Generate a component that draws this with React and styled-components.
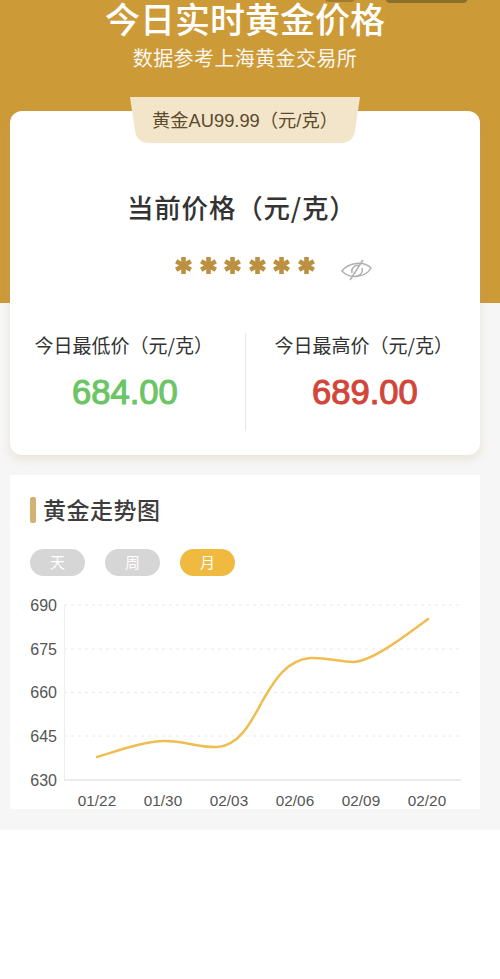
import React from "react";
import styled, { createGlobalStyle } from "styled-components";

const FONT = `"Noto Sans CJK SC", "Noto Sans", sans-serif`;
const NUM = `"Liberation Sans", "Noto Sans CJK SC", sans-serif`;

const GlobalStyle = createGlobalStyle`
  html, body { margin: 0; padding: 0; background: #fff; }
  * { box-sizing: border-box; }
`;

const Page = styled.div`
  position: relative;
  width: 500px;
  height: 979px;
  overflow: hidden;
  font-family: ${FONT};
  background: #fff;
`;

const Grey = styled.div`
  background: #f6f6f6;
  height: 830px;
  display: flex;
  flex-direction: column;
`;

const Header = styled.header`
  position: relative;
  height: 303px;
  flex-shrink: 0;
  background: #cd9a38;
  text-align: center;
  color: #fff;
  padding-right: 10px;
`;

const TopChip = styled.span`
  position: absolute;
  top: -8px;
  right: 32px;
  width: 83px;
  height: 11px;
  border-radius: 6px;
  background: #8c6f2c;
`;

const TopDot = styled.span`
  position: absolute;
  top: -6px;
  left: 325px;
  width: 30px;
  height: 8px;
  border-radius: 4px;
  background: #a07c30;
`;

const Title = styled.h1`
  margin: 0;
  font-size: 35px;
  line-height: 36px;
  font-weight: 500;
`;

const Subtitle = styled.p`
  margin: 8px 0 0;
  font-size: 20px;
  line-height: 28px;
  letter-spacing: 0.4px;
  opacity: 0.92;
`;

const PriceCard = styled.section`
  position: relative;
  margin: -192px 20px 0 10px;
  height: 344px;
  background: #fff;
  border-radius: 12px;
  box-shadow: 0 4px 10px rgba(190, 160, 110, 0.22);
  padding-top: 77px;
`;

const Tag = styled.div`
  position: absolute;
  top: -14px;
  left: 120px;
  width: 230px;
  height: 46px;
  display: flex;
  align-items: center;
  justify-content: center;
  padding-bottom: 2px;
  color: #5b4a2c;
  font-size: 18.3px;
  background: #f3e5c9;
  clip-path: path("M0 0 H230 L225 34 Q223 46 211 46 H19 Q7 46 5 34 Z");
  font-family: ${NUM};
`;

const PriceTitle = styled.h2`
  margin: 0 0 0 117px;
  font-size: 26.5px;
  line-height: 38px;
  font-weight: 500;
  color: #333;
  letter-spacing: 0.8px;
`;

const StarRow = styled.div`
  display: flex;
  align-items: center;
  margin: 22px 0 0 165px;
  height: 34px;
`;

const Star = styled.svg`
  width: 17px;
  height: 17px;
  margin-right: 7.5px;
  flex-shrink: 0;
`;

const EyeIcon = styled.svg`
  width: 31px;
  height: 22px;
  margin: 10px 0 0 18.5px;
`;

const Stats = styled.div`
  display: flex;
  margin-top: 51px;
  height: 98px;
`;

const Stat = styled.div`
  width: 235px;
  padding-left: ${(p) => (p.$divided ? "28.5px" : "24.5px")};
  border-left: ${(p) => (p.$divided ? "1.5px solid #e8e8e8" : "none")};
`;

const StatLabel = styled.div`
  font-size: 19px;
  line-height: 24px;
  color: #333;
`;

const StatValue = styled.div`
  margin: 15px 0 0 37.5px;
  font-family: ${NUM};
  font-size: 34.6px;
  line-height: 40px;
  font-weight: 400;
  -webkit-text-stroke: 1.1px ${(p) => p.$color};
  color: ${(p) => p.$color};
`;

const TrendPanel = styled.section`
  margin: 20px 20px 0 10px;
  height: 334px;
  background: #fff;
  padding: 20px 20px 0;
  overflow: hidden;
`;

const TrendHead = styled.div`
  display: flex;
  align-items: center;
  gap: 7px;
  height: 30px;
`;

const Bar = styled.span`
  width: 6px;
  height: 26px;
  border-radius: 2px;
  background: #d2b173;
`;

const TrendTitle = styled.h3`
  margin: -3px 0 0;
  font-size: 23px;
  line-height: 30px;
  font-weight: 500;
  color: #3d3d3d;
  letter-spacing: 0.5px;
`;

const Tabs = styled.div`
  display: flex;
  gap: 20px;
  margin-top: 24px;
`;

const TabBtn = styled.div`
  width: 55px;
  height: 27px;
  border-radius: 14px;
  display: flex;
  align-items: center;
  justify-content: center;
  padding-bottom: 2px;
  color: #fff;
  font-size: 15px;
  background: ${(p) => (p.$active ? "#f0ba41" : "#d6d6d6")};
`;

const Chart = styled.svg`
  display: block;
  width: 470px;
  height: 215px;
  margin: 19px 0 0 -20px;
  font-family: ${NUM};
`;

const ticks = [
  { label: 690, y: 10 },
  { label: 675, y: 54 },
  { label: 660, y: 97.5 },
  { label: 645, y: 141 },
];

const dates = [
  { label: "01/22", x: 87 },
  { label: "01/30", x: 153 },
  { label: "02/03", x: 219 },
  { label: "02/06", x: 285 },
  { label: "02/09", x: 351 },
  { label: "02/20", x: 417 },
];

function App() {
  return (
    <Page>
      <GlobalStyle />
      <Grey>
        <Header>
          <TopDot />
          <TopChip />
          <Title>今日实时黄金价格</Title>
          <Subtitle>数据参考上海黄金交易所</Subtitle>
        </Header>
        <PriceCard>
          <Tag>黄金AU99.99（元/克）</Tag>
          <PriceTitle>当前价格（元/克）</PriceTitle>
          <StarRow>
            {[0, 1, 2, 3, 4, 5].map((i) => (
              <Star key={i} viewBox="0 0 17 17">
                <g stroke="#bb9040" strokeWidth="4.6">
                  <line x1="8.5" y1="0" x2="8.5" y2="17" />
                  <line x1="1.2" y1="4.3" x2="15.8" y2="12.7" />
                  <line x1="1.2" y1="12.7" x2="15.8" y2="4.3" />
                </g>
              </Star>
            ))}
            <EyeIcon viewBox="0 0 31 22" fill="none" stroke="#b0b0b0" strokeWidth="1.5">
              <path d="M1 12 C7 4 22 1 30 9 C25 18 9 21 1 12 Z" />
              <path d="M11 14 A6 6 0 0 1 18 6.5" />
              <path d="M21 9 A6 6 0 0 1 15 17" />
              <line x1="22" y1="1" x2="9" y2="21" />
            </EyeIcon>
          </StarRow>
          <Stats>
            <Stat>
              <StatLabel>今日最低价（元/克）</StatLabel>
              <StatValue $color="#6cc565">684.00</StatValue>
            </Stat>
            <Stat $divided>
              <StatLabel>今日最高价（元/克）</StatLabel>
              <StatValue $color="#d2463a">689.00</StatValue>
            </Stat>
          </Stats>
        </PriceCard>
        <TrendPanel>
          <TrendHead>
            <Bar />
            <TrendTitle>黄金走势图</TrendTitle>
          </TrendHead>
          <Tabs>
            <TabBtn>天</TabBtn>
            <TabBtn>周</TabBtn>
            <TabBtn $active>月</TabBtn>
          </Tabs>
          <Chart viewBox="0 0 470 215">
            {ticks.map((t) => (
              <g key={t.label}>
                <line x1="54" x2="451" y1={t.y} y2={t.y} stroke="#e8e8e8" strokeDasharray="3 4" />
                <text x="47" y={t.y + 5.5} textAnchor="end" fontSize="16" fill="#555">{t.label}</text>
              </g>
            ))}
            <line x1="54.5" x2="54.5" y1="10" y2="185" stroke="#eee" />
            <line x1="54" x2="451" y1="185" y2="185" stroke="#e4e4e4" strokeWidth="1.5" />
            <text x="47" y="190.5" textAnchor="end" fontSize="16" fill="#555">630</text>
            {dates.map((d) => (
              <text key={d.label} x={d.x} y="211" textAnchor="middle" fontSize="15.3" fill="#555">{d.label}</text>
            ))}
            <path
              d="M87 162 C110 155 135 146 155 146 C175 146 190 153 207 152 C230 151 242 125 253 105 C262 90 275 65 300 63 C315 62 330 67 343 67 C360 67 390 45 418 24"
              fill="none"
              stroke="#efbd50"
              strokeWidth="2.5"
              strokeLinecap="round"
            />
          </Chart>
        </TrendPanel>
      </Grey>
    </Page>
  );
}

export default App;
